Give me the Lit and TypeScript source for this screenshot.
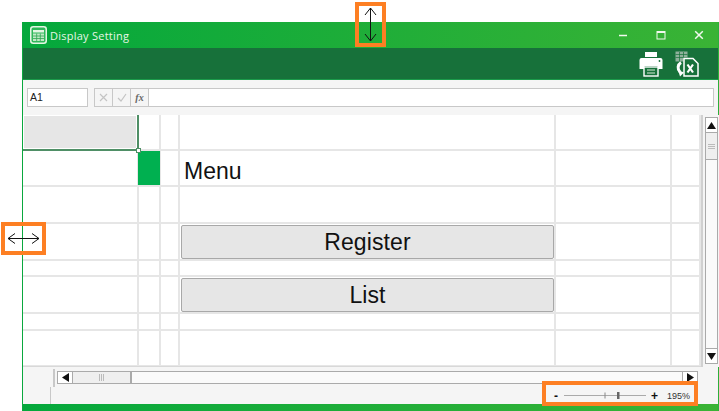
import { LitElement, html, css, svg } from "lit";
import { customElement } from "lit/decorators.js";

const COLS = [116, 22, 19, 376, 116, 29];
const ROWS = [36, 36, 37, 37, 16, 37, 17, 36];

@customElement("app-root")
export class AppRoot extends LitElement {
  static styles = css`
    :host { display: block; position: relative; width: 719px; height: 411px; background: #fff; overflow: hidden; font-family: "Liberation Sans", Arial, sans-serif; }
    .window { position: relative; margin: 22px 0 0 22px; width: 697px; height: 389px; box-sizing: border-box; border-left: 1px solid #0aa83e; border-right: 1px solid #2bb03a; display: flex; flex-direction: column; background: #f5f5f5; }
    .title { height: 26px; flex: none; background: linear-gradient(90deg, #04a83c 0%, #3ab335 100%); display: flex; align-items: center; color: #e6f6e6; padding-left: 7px; box-sizing: border-box; }
    .title .name { margin-left: 3px; letter-spacing: 0.25px; font-family: "Open Sans", sans-serif; font-size: 11px; }
    .ctrls { margin-left: auto; display: flex; margin-right: 14px; gap: 28px; align-items: center; }
    .ctrls svg { display: block; }
    .band { height: 32px; flex: none; background: #17713a; border-bottom: 1px solid #1b9a4a; display: flex; justify-content: flex-end; align-items: center; gap: 12px; padding-right: 19px; box-sizing: border-box; }
    .band svg { display: block; }
    .fbar { height: 35px; flex: none; display: flex; align-items: center; padding: 0 4px; gap: 6px; box-sizing: border-box; background: #f5f5f5; }
    .namebox { width: 61px; height: 19px; box-sizing: border-box; border: 1px solid #c8c8c8; background: #fff; font-size: 10.5px; line-height: 17px; padding-left: 2px; color: #222; }
    .fbtns { display: flex; flex: 1; height: 19px; background: #fff; border: 1px solid #c8c8c8; box-sizing: border-box; }
    .fbtn { width: 18px; border-right: 1px solid #c8c8c8; background: #f5f5f5; display: flex; align-items: center; justify-content: center; box-sizing: border-box; }
    .fx { font: italic 700 10px "Liberation Serif", serif; color: #666; }
    .body { flex: 1; display: flex; min-height: 0; background: #fff; }
    .sheet { display: grid; flex: none; width: 678px; height: 251px; overflow: hidden; background: #fff; border-bottom: 1px solid #d8d8d8; box-sizing: content-box; }
    .cell { border-right: 2px solid #e6e6e6; border-bottom: 2px solid #e6e6e6; box-sizing: border-box; position: relative; min-width: 0; }
    .cell.sel { background: #e6e6e6; border-right: 2px solid #4f8f66; border-bottom: 2px solid #4f8f66; box-shadow: inset 0 0 0 1px #fff; }
    .handle { position: absolute; right: -4px; bottom: -4px; width: 3px; height: 3px; border: 1px solid #4f8f66; background: #fff; z-index: 1; }
    .cell.green { background: #00b050; border-right-width: 1px; margin-left: -1px; }
    .menu { font-size: 23px; line-height: 34px; padding: 3px 0 0 4px; color: #111; }
    .btn { display: flex; align-items: center; justify-content: center; box-sizing: border-box; height: 34px; margin: 1px 0 0 1px; padding-top: 1px; border: 1px solid #a8a8a8; border-radius: 2px; background: #e6e6e6; font-size: 23px; color: #111; letter-spacing: 0.1px; }
    .vbar { flex: 1; border-left: 2px solid #d0d0d0; background: #f5f5f5; padding: 2px 2px 3px 2px; display: flex; flex-direction: column; box-sizing: border-box; }
    .vtrack { width: 13px; flex: 1; display: flex; flex-direction: column; border: 1px solid #aaa; box-sizing: border-box; background: #fff; }
    .arr { height: 14px; flex: none; background: #fff; display: flex; align-items: center; justify-content: center; }
    .vthumb { height: 26px; background: #efefef; border-top: 1px solid #aaa; border-bottom: 1px solid #aaa; flex: none; display: flex; flex-direction: column; align-items: center; justify-content: center; gap: 1px; }
    .vthumb i { display: block; width: 7px; height: 1px; background: #bbb; }
    .vspace { flex: 1; background: #fafafa; }
    .vend { border-top: 1px solid #aaa; }
    .bottom { height: 37px; flex: none; display: flex; flex-direction: column; background: #f5f5f5; }
    .hrow { height: 20px; flex: none; display: flex; align-items: center; }
    .tabs { width: 30px; height: 18px; border-right: 2px solid #c8c8c8; flex: none; margin-top: 2px; box-sizing: content-box; }
    .htrack { margin-left: 2px; width: 641px; height: 13px; display: flex; border: 1px solid #aaa; box-sizing: border-box; background: #fafafa; }
    .harr { width: 14px; flex: none; background: #fff; display: flex; align-items: center; justify-content: center; }
    .hthumb { width: 60px; flex: none; background: #efefef; border-left: 1px solid #aaa; border-right: 2px solid #aaa; display: flex; align-items: center; justify-content: center; gap: 1px; box-sizing: border-box; }
    .hthumb i { display: block; width: 1px; height: 7px; background: #bbb; }
    .hspace { flex: 1; }
    .hend { border-left: 1px solid #aaa; }
    .srow { height: 17px; flex: none; display: flex; align-items: center; }
    .sleft { width: 27px; height: 17px; border-right: 1px solid #c8c8c8; flex: none; }
    .zoom { margin-left: auto; display: flex; align-items: center; margin-right: 28px; font-size: 9px; color: #333; }
    .zoom b { color: #111; font-size: 12px; line-height: 12px; }
    .minus { width: 10px; text-align: right; }
    .slider { width: 82px; height: 9px; margin: 0 5px 0 6px; display: block; }
    .plus { width: 10px; }
    .pct { margin-left: 6px; }
    .green-foot { height: 7px; flex: none; background: linear-gradient(90deg, #04a83c 0%, #3ab335 100%); }
    .note { position: absolute; box-sizing: border-box; border: 4px solid #fd7f23; }
    .n1 { left: 355px; top: 2px; width: 31px; height: 45px; }
    .n2 { left: 1px; top: 222px; width: 45px; height: 33px; }
    .n3 { left: 542px; top: 381px; width: 156px; height: 25px; }
    .note svg { position: absolute; display: block; left: 0; top: 0; }
  `;

  private cell(r: number, c: number) {
    const cls = ["cell"];
    let inner: unknown = "";
    if (r === 0 && c === 0) { cls.push("sel"); inner = html`<div class="handle"></div>`; }
    if (r === 1 && c === 1) cls.push("green");
    if (r === 1 && c === 3) inner = html`<div class="menu">Menu</div>`;
    if (r === 3 && c === 3) inner = html`<div class="btn">Register</div>`;
    if (r === 5 && c === 3) inner = html`<div class="btn">List</div>`;
    return html`<div class=${cls.join(" ")}>${inner}</div>`;
  }

  render() {
    const gridStyle = `grid-template-columns:${COLS.map((c) => c + "px").join(" ")};grid-template-rows:${ROWS.map((r) => r + "px").join(" ")}`;
    return html`
      <div class="window">
        <div class="title">
          <svg width="17" height="18" viewBox="0 0 17 18">
            <rect x="0.75" y="0.75" width="15.5" height="16.5" rx="2.5" fill="#2fb85a" stroke="#e3f6e3" stroke-width="1.5"/>
            <rect x="3" y="4" width="11" height="2.5" fill="#e3f6e3"/>
            <path d="M3 7.5h11v7.5h-11z" fill="#bfeac5"/>
            <path d="M3 10h11M3 12.5h11M6.7 7.5v7.5M10.3 7.5v7.5" stroke="#2fa653" stroke-width="0.8"/>
          </svg>
          <span class="name">Display Setting</span>
          <div class="ctrls">
            <svg width="10" height="10" viewBox="0 0 10 10"><path d="M1 5.5h8" stroke="#f2f8ee" stroke-width="1.5"/></svg>
            <svg width="10" height="10" viewBox="0 0 10 10"><rect x="1" y="1.5" width="8" height="7.5" fill="none" stroke="#f2f8ee" stroke-width="1"/><path d="M1 2.2h8" stroke="#f2f8ee" stroke-width="1.6"/></svg>
            <svg width="10" height="10" viewBox="0 0 10 10"><path d="M1.2 1.2l7.6 7.6M8.8 1.2l-7.6 7.6" stroke="#f2f8ee" stroke-width="1.5"/></svg>
          </div>
        </div>
        <div class="band">
          <svg width="24" height="26" viewBox="0 0 24 26">
            <path d="M6 1h12v5H6z" fill="#fff"/>
            <path d="M2.5 7h19a2 2 0 0 1 2 2v9h-5v-3H5.500v3H.5V9a2 2 0 0 1 2-2z" fill="#fff"/>
            <rect x="5" y="16" width="14" height="9" fill="#17713a" stroke="#fff" stroke-width="1.4"/>
            <path d="M8 19h8M8 22h8" stroke="#d8ecd8" stroke-width="1.2"/>
            <circle cx="20.500" cy="10" r="0.900" fill="#17713a"/>
          </svg>
          <svg width="24" height="26" viewBox="0 0 24 26">
            <path d="M0.500 0.500h12v10h-12z" fill="#8fb09b"/>
            <path d="M0.500 3.500h12M0.500 6.500h12M4.500 1v9.500M8.500 1v9.500" stroke="#17713a" stroke-width="0.7"/>
            <path d="M6 11.500a6 6 0 0 0-1 9.500" fill="none" stroke="#fff" stroke-width="3"/>
            <path d="M3 19l6 2.500-4 4z" fill="#fff"/>
            <path d="M9 7.500H18l5 5V25H9z" fill="#17713a" stroke="#fff" stroke-width="1.500"/>
            <path d="M12.500 13.500l5.500 8M18 13.500l-5.500 8" stroke="#fff" stroke-width="2.200"/>
          </svg>
        </div>
        <div class="fbar">
          <div class="namebox">A1</div>
          <div class="fbtns">
            <div class="fbtn"><svg width="9" height="9" viewBox="0 0 9 9"><path d="M1 1l7 7M8 1l-7 7" stroke="#c4c4c4" stroke-width="1.200"/></svg></div>
            <div class="fbtn"><svg width="10" height="9" viewBox="0 0 10 9"><path d="M1 5l3 3 5-7" fill="none" stroke="#c4c4c4" stroke-width="1.200"/></svg></div>
            <div class="fbtn"><span class="fx">fx</span></div>
          </div>
        </div>
        <div class="body">
          <div class="sheet" style=${gridStyle}>
            ${ROWS.map((_, r) => COLS.map((_c, c) => this.cell(r, c)))}
          </div>
          <div class="vbar">
            <div class="vtrack">
              <div class="arr"><svg width="9" height="7" viewBox="0 0 9 7"><path d="M4.500 0L9 7H0z" fill="#111"/></svg></div>
              <div class="vthumb"><i></i><i></i><i></i></div>
              <div class="vspace"></div>
              <div class="arr vend"><svg width="9" height="7" viewBox="0 0 9 7"><path d="M0 0h9L4.500 7z" fill="#111"/></svg></div>
            </div>
          </div>
        </div>
        <div class="bottom">
          <div class="hrow">
            <div class="tabs"></div>
            <div class="htrack">
              <div class="harr"><svg width="7" height="9" viewBox="0 0 7 9"><path d="M7 0v9L0 4.500z" fill="#111"/></svg></div>
              <div class="hthumb"><i></i><i></i><i></i></div>
              <div class="hspace"></div>
              <div class="harr hend"><svg width="7" height="9" viewBox="0 0 7 9"><path d="M0 0v9l7-4.500z" fill="#111"/></svg></div>
            </div>
          </div>
          <div class="srow">
            <div class="sleft"></div>
            <div class="zoom">
              <b class="minus">-</b>
              <svg class="slider" viewBox="0 0 82 9"><path d="M0 4.500h82" stroke="#aaa" stroke-width="1"/><path d="M41 1.500v6" stroke="#888" stroke-width="1"/><rect x="53" y="1" width="2.500" height="7" fill="#666"/></svg>
              <b class="plus">+</b>
              <span class="pct">195%</span>
            </div>
          </div>
        </div>
        <div class="green-foot"></div>
      </div>
      <div class="note n1"><svg width="23" height="37" viewBox="0 0 23 37">${svg`<path d="M11.500 2v33M6 9l5.500-7 5.500 7M6 28l5.500 7 5.500-7" fill="none" stroke="#111" stroke-width="1"/>`}</svg></div>
      <div class="note n2"><svg width="37" height="25" viewBox="0 0 37 25">${svg`<path d="M3 12.500h31M10 7.500l-7 5 7 5M27 7.500l7 5-7 5" fill="none" stroke="#111" stroke-width="1"/>`}</svg></div>
      <div class="note n3"></div>
    `;
  }
}
